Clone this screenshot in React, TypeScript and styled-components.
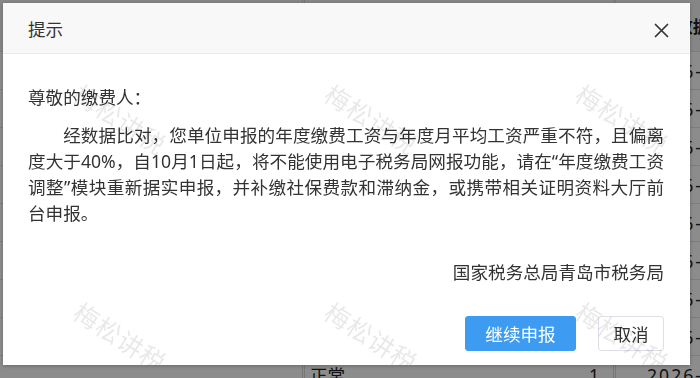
import styled, { createGlobalStyle } from "styled-components";

const GlobalStyle = createGlobalStyle`
  html, body {
    margin: 0;
    padding: 0;
    width: 700px;
    height: 378px;
    overflow: hidden;
    background: #ffffff;
    font-family: "Noto Sans", "Noto Sans CJK SC", sans-serif;
  }
`;

type RowType = { id: number; status: string; count: string; date: string };

const rows: RowType[] = Array.from({ length: 9 }, (_, i) => ({
  id: i,
  status: "正常",
  count: "1",
  date: "2026-01-01",
}));

const watermarks = Array.from({ length: 6 }, (_, i) => i);

function App() {
  return (
    <>
      <GlobalStyle />
      <Spage>
        <Stable>
          <SheadRow>
            <Scell />
            <Scell $line>状态</Scell>
            <Scell $right>人数</Scell>
            <Scell $line $date>
              核定数据
            </Scell>
          </SheadRow>
          {rows.map((row) => (
            <Srow key={row.id}>
              <Scell />
              <Scell $line>{row.status}</Scell>
              <Scell $right>{row.count}</Scell>
              <Scell $line $date>
                {row.date}
              </Scell>
            </Srow>
          ))}
        </Stable>
      </Spage>

      <Smask />

      <Sdialog>
        <Swatermarks>
          {watermarks.map((w) => (
            <Smark key={w}>
              <span>梅松讲税</span>
            </Smark>
          ))}
        </Swatermarks>

        <Sheader>
          <Stitle>提示</Stitle>
          <Sclose aria-label="关闭">
            <svg width="15" height="15" viewBox="0 0 15 15">
              <path d="M1.5 1.5 L13.5 13.5 M13.5 1.5 L1.5 13.5" stroke="#333" strokeWidth="1.7" strokeLinecap="round" />
            </svg>
          </Sclose>
        </Sheader>

        <Sbody>
          <Sgreeting>尊敬的缴费人：</Sgreeting>
          <Sparagraph>
            经数据比对，您单位申报的年度缴费工资与年度月平均工资严重不符，且偏离度大于40%，自10月1日起，将不能使用电子税务局网报功能，请在“年度缴费工资调整”模块重新据实申报，并补缴社保费款和滞纳金，或携带相关证明资料大厅前台申报。
          </Sparagraph>
          <Ssign>国家税务总局青岛市税务局</Ssign>
        </Sbody>

        <Sfooter>
          <Sbutton $primary>继续申报</Sbutton>
          <Sbutton>取消</Sbutton>
        </Sfooter>
      </Sdialog>
    </>
  );
}
export default App;

const Spage = styled.div`
  width: 700px;
  height: 378px;
  overflow: hidden;
`;

const Stable = styled.div`
  display: flex;
  flex-direction: column;
  font-size: 17.6px;
  color: #222;
`;

const SheadRow = styled.div`
  display: grid;
  grid-template-columns: 302px 150px 161px 1fr;
  height: 52px;
  align-items: center;
  background: #f4f4f4;
  font-weight: 700;
  border-bottom: 1px solid #e4e4e4;
  box-sizing: border-box;
  & > div {
    letter-spacing: 0;
    padding-left: 24px;
  }
`;

const Srow = styled.div`
  display: grid;
  grid-template-columns: 302px 150px 161px 1fr;
  height: 38px;
  align-items: center;
  border-bottom: 1px solid #e4e4e4;
  box-sizing: border-box;
`;

const Scell = styled.div<{ $line?: boolean; $right?: boolean; $date?: boolean }>`
  height: 100%;
  display: flex;
  align-items: center;
  box-sizing: border-box;
  white-space: nowrap;
  overflow: hidden;
  border-left: ${(p) => (p.$line ? "3px double #d8d8d8" : "none")};
  justify-content: ${(p) => (p.$right ? "flex-end" : "flex-start")};
  padding: ${(p) => (p.$date ? "0 0 0 31px" : p.$right ? "0 14px 0 0" : "0 0 0 5px")};
  letter-spacing: ${(p) => (p.$date ? "2px" : "0")};
`;

const Smask = styled.div`
  position: fixed;
  inset: 0;
  background: rgba(0, 0, 0, 0.45);
`;

const Sdialog = styled.div`
  position: fixed;
  left: 3px;
  top: 3px;
  width: 687px;
  display: flex;
  flex-direction: column;
  background: #fff;
  color: #333;
  font-size: 17.6px;
  box-shadow: 0 1px 4px rgba(0, 0, 0, 0.25);
  overflow: hidden;
`;

const Swatermarks = styled.div`
  position: absolute;
  inset: 0;
  pointer-events: none;
  display: grid;
  grid-template-columns: repeat(3, 251px);
  grid-auto-rows: 218px;
  padding: 72px 0 0 84px;
  z-index: 2;
`;

const Smark = styled.div`
  span {
    display: inline-block;
    transform: rotate(33deg);
    transform-origin: 0 0;
    font-size: 25px;
    letter-spacing: 1px;
    color: rgba(0, 0, 0, 0.09);
    white-space: nowrap;
  }
`;

const Sheader = styled.div`
  height: 51px;
  box-sizing: border-box;
  display: flex;
  align-items: center;
  justify-content: space-between;
  padding: 0 21px 0 25px;
  background: #f8f8f8;
  border-bottom: 1px solid #ececec;
`;

const Stitle = styled.div`
  font-size: 17.6px;
  color: #333;
  line-height: 1;
  padding-top: 3px;
`;

const Sclose = styled.button`
  border: none;
  background: transparent;
  padding: 0;
  width: 15px;
  height: 15px;
  margin-top: 5px;
  display: flex;
  cursor: pointer;
`;

const Sbody = styled.div`
  padding: 30px 26px 0 25px;
  line-height: 26px;
`;

const Sgreeting = styled.p`
  margin: 0 0 12px;
`;

const Sparagraph = styled.p`
  margin: 0;
  text-indent: 2em;
  text-align: justify;
`;

const Ssign = styled.p`
  margin: 33px 0 0;
  text-align: right;
`;

const Sfooter = styled.div`
  display: flex;
  justify-content: flex-end;
  gap: 22px;
  padding: 31px 26px 14px 0;
`;

const Sbutton = styled.button<{ $primary?: boolean }>`
  height: 35px;
  padding: 0;
  box-sizing: border-box;
  display: flex;
  align-items: center;
  justify-content: center;
  white-space: nowrap;
  border-radius: 3px;
  font-family: "Noto Sans", "Noto Sans CJK SC", sans-serif;
  font-size: 17.6px;
  cursor: pointer;
  color: ${(p) => (p.$primary ? "#fff" : "#333")};
  background: ${(p) => (p.$primary ? "#3d9cf1" : "#fff")};
  border: 1px solid ${(p) => (p.$primary ? "#3d9cf1" : "#dcdfe6")};
  width: ${(p) => (p.$primary ? "111px" : "66px")};
`;
